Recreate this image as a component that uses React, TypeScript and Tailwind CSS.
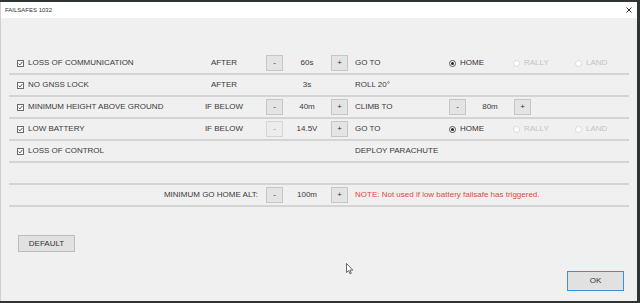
import React from 'react';

const FONT = { fontFamily: '"Liberation Sans", Arial, sans-serif' };

function CheckBox() {
  return (
    <span className="w-[7px] h-[7px] border border-[#6b6b6b] bg-white flex items-center justify-center shrink-0">
      <svg width="5" height="5" viewBox="0 0 5 5">
        <path d="M0.6 2.6 L2 3.9 L4.4 0.9" stroke="#444" strokeWidth="0.9" fill="none" />
      </svg>
    </span>
  );
}

function StepBtn({ label, disabled }: { label: string; disabled?: boolean }) {
  return (
    <div
      className={`w-[17px] h-[16px] shrink-0 flex items-center justify-center border text-[8px] ${
        disabled ? 'border-[#d4d4d4] bg-[#ececec] text-[#9a9a9a]' : 'border-[#c6c6c6] bg-[#e4e4e4] text-[#333]'
      }`}
    >
      {label}
    </div>
  );
}

function Stepper({ value, minusDisabled }: { value: string; minusDisabled?: boolean }) {
  return (
    <div className="flex items-center">
      <StepBtn label="-" disabled={minusDisabled} />
      <div className="w-[48px] text-center">{value}</div>
      <StepBtn label="+" />
    </div>
  );
}

function Radio({ label, checked, disabled }: { label: string; checked?: boolean; disabled?: boolean }) {
  return (
    <div className={`flex items-center gap-[4px] ${disabled ? 'text-[#c4c4c4]' : 'text-[#333]'}`}>
      <span
        className={`w-[7px] h-[7px] rounded-full border flex items-center justify-center bg-white ${
          disabled ? 'border-[#dadada]' : 'border-[#555]'
        }`}
      >
        {checked && <span className="w-[3px] h-[3px] rounded-full bg-[#222]" />}
      </span>
      {label}
    </div>
  );
}

function HomeOptions() {
  return (
    <div className="flex items-center">
      <div className="w-[64px]">
        <Radio label="HOME" checked />
      </div>
      <div className="w-[62px]">
        <Radio label="RALLY" disabled />
      </div>
      <Radio label="LAND" disabled />
    </div>
  );
}

type Row = {
  label: string;
  cond: string;
  value: string;
  stepper: boolean;
  minusDisabled?: boolean;
  action: string;
  options?: React.ReactNode;
};

const ROWS: Row[] = [
  { label: 'LOSS OF COMMUNICATION', cond: 'AFTER', value: '60s', stepper: true, action: 'GO TO', options: <HomeOptions /> },
  { label: 'NO GNSS LOCK', cond: 'AFTER', value: '3s', stepper: false, action: 'ROLL 20°' },
  {
    label: 'MINIMUM HEIGHT ABOVE GROUND',
    cond: 'IF BELOW',
    value: '40m',
    stepper: true,
    action: 'CLIMB TO',
    options: <Stepper value="80m" />,
  },
  {
    label: 'LOW BATTERY',
    cond: 'IF BELOW',
    value: '14.5V',
    stepper: true,
    minusDisabled: true,
    action: 'GO TO',
    options: <HomeOptions />,
  },
  { label: 'LOSS OF CONTROL', cond: '', value: '', stepper: false, action: 'DEPLOY PARACHUTE' },
];

function Line({ children }: { children?: React.ReactNode }) {
  return <div className="h-[22px] flex items-center border-b-2 border-[#d4d4d4]">{children}</div>;
}

function Cursor() {
  return (
    <svg width="8" height="12" viewBox="0 0 8 12" className="absolute left-[346px] top-[263px]">
      <path d="M0.5 0.5 L0.5 9.5 L2.6 7.6 L4 10.8 L5.3 10.2 L3.9 7.1 L6.8 7.1 Z" fill="#fff" stroke="#444" strokeWidth="0.8" />
    </svg>
  );
}

export default function App() {
  return (
    <div className="w-[640px] h-[303px] bg-[#2f3532] relative overflow-hidden" style={FONT}>
      <div className="absolute left-0 top-[2px] w-[637px] h-[299px] bg-[#f0f0f0] border-l border-[#cfcfcf] flex flex-col">
        <div className="h-[16px] bg-white flex items-center justify-between pl-[4px] pr-[4px] text-[6px] text-[#333] shrink-0">
          <span>FAILSAFES 1032</span>
          <svg width="6" height="6" viewBox="0 0 6 6" className="mr-[1px]">
            <path d="M0.5 0.5 L5.5 5.5 M5.5 0.5 L0.5 5.5" stroke="#333" strokeWidth="1" />
          </svg>
        </div>

        <div className="ml-[8px] w-[620px] mt-[35px] text-[8px] text-[#3a3a3a]">
          {ROWS.map((r) => (
            <Line key={r.label}>
              <div className="w-[181px] pl-[8px] flex items-center gap-[4px] shrink-0">
                <CheckBox />
                <span>{r.label}</span>
              </div>
              <div className="w-[68px] text-center shrink-0">{r.cond}</div>
              <div className="w-[8px] shrink-0" />
              <div className="w-[82px] shrink-0 flex items-center">
                {r.stepper ? (
                  <Stepper value={r.value} minusDisabled={r.minusDisabled} />
                ) : (
                  <div className="w-[82px] text-center">{r.value}</div>
                )}
              </div>
              <div className="w-[7px] shrink-0" />
              <div className="w-[94px] shrink-0">{r.action}</div>
              {r.options}
            </Line>
          ))}
          <Line />
          <Line>
            <div className="w-[249px] text-right shrink-0">MINIMUM GO HOME ALT:</div>
            <div className="w-[8px] shrink-0" />
            <div className="w-[82px] shrink-0">
              <Stepper value="100m" />
            </div>
            <div className="w-[7px] shrink-0" />
            <div className="text-[#e0483a]">NOTE: Not used if low battery failsafe has triggered.</div>
          </Line>
        </div>

        <div className="mt-[28px] ml-[17px] w-[57px] h-[17px] border border-[#bdbdbd] bg-[#e1e1e1] flex items-center justify-center text-[8px] text-[#333]">
          DEFAULT
        </div>

        <div className="flex justify-end pr-[13px] mt-[19px]">
          <div className="w-[57px] h-[20px] border border-[#3f8fd8] bg-[#e1e1e1] flex items-center justify-center text-[8px] text-[#333]">
            OK
          </div>
        </div>
      </div>
      <Cursor />
    </div>
  );
}
